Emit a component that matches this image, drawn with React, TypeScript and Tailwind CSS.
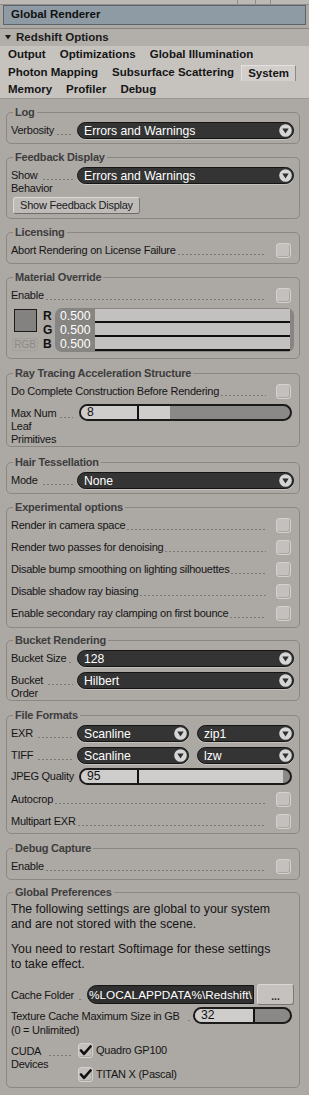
import React from 'react';

const LABEL = 'text-[11px] leading-[13px] tracking-[-0.25px] text-[#151515]';

function Leader({ className = '' }: { className?: string }) {
  return (
    <div
      className={`mb-[2px] h-px min-w-0 flex-1 self-end bg-[repeating-linear-gradient(90deg,#7b7875_0px,#7b7875_2px,transparent_2px,transparent_4px)] ${className}`}
    />
  );
}

function FieldLabel({
  lines,
  w = 'w-[66px]',
  leader = 'ml-[5px] mr-[4px]',
  pt = 'pt-[2px]',
  lh = 'leading-[13px]',
}: {
  lines: string[];
  w?: string;
  leader?: string;
  pt?: string;
  lh?: string;
}) {
  return (
    <div className={`${w} shrink-0 ${pt} ${LABEL} ${lh}`}>
      <div className="flex">
        <span className="whitespace-nowrap">{lines[0]}</span>
        <Leader className={leader} />
      </div>
      {lines.slice(1).map((l) => (
        <div key={l} className="whitespace-nowrap">
          {l}
        </div>
      ))}
    </div>
  );
}

function Check({ checked = false, className = '' }: { checked?: boolean; className?: string }) {
  return (
    <div
      className={`flex h-[15px] w-[15px] shrink-0 items-center justify-center rounded-[3px] border border-[#d3d0cd] bg-[#c3c0bd] shadow-[inset_-1px_-1px_0_#a8a5a2] ${className}`}
    >
      {checked && (
        <svg width="13" height="13" viewBox="0 0 13 13">
          <path d="M2 6.5 L5 9.8 L11.5 2.5" fill="none" stroke="#111" strokeWidth="2.6" strokeLinecap="round" strokeLinejoin="round" />
        </svg>
      )}
    </div>
  );
}

function CheckRow({ label }: { label: string }) {
  return (
    <div className="flex h-[22px] items-center">
      <div className={`flex min-w-0 flex-1 ${LABEL}`}>
        <span className="whitespace-nowrap">{label}</span>
        <Leader className="ml-[2px] mr-[10px]" />
      </div>
      <Check className="mr-[3px]" />
    </div>
  );
}

function Dropdown({ value, className = '' }: { value: string; className?: string }) {
  return (
    <div
      className={`flex h-[17px] items-center rounded-full border border-[#141414] bg-[#343434] pl-[6px] pr-px shadow-[0_1px_0_#c4c1be] ${className}`}
    >
      <span className="min-w-0 flex-1 truncate pt-px text-[12.2px] leading-[14px] text-white">{value}</span>
      <svg width="13" height="13" viewBox="0 0 13 13" className="shrink-0">
        <circle cx="6.5" cy="6.5" r="6.3" fill="#d6d6d6" />
        <path d="M3.3 4.6 L9.7 4.6 L6.5 9.4 Z" fill="#2e2e2e" />
      </svg>
    </div>
  );
}

function Slider({
  value,
  textW,
  fill,
  className = '',
}: {
  value: string;
  textW: string;
  fill: string;
  className?: string;
}) {
  return (
    <div className={`flex h-[17px] overflow-hidden rounded-full border-2 border-[#1b1b1b] bg-[#8b8987] ${className}`}>
      <div className={`${textW} shrink-0 bg-[#cfcdcb] pl-[6px] text-[12.2px] leading-[13px] text-[#111]`}>{value}</div>
      <div className="w-[2px] shrink-0 bg-[#111]" />
      <div className={`${fill} shrink-0 bg-[#cfcdcb]`} />
    </div>
  );
}

function Group({ title, className = '', children }: { title: string; className?: string; children: React.ReactNode }) {
  return (
    <fieldset
      className={`ml-[6px] w-[294px] min-w-0 rounded-[5px] border border-[#8b8884] pl-[4px] pr-[5px] pt-0 ${className}`}
    >
      <legend className="ml-[2px] px-[2px] text-[11px] font-bold leading-[14px] tracking-[-0.2px] text-[#3d3d3d]">
        {title}
      </legend>
      {children}
    </fieldset>
  );
}

function TabRow({ items, selected, h }: { items: string[]; selected?: string; h: string }) {
  return (
    <div className={`flex ${h} items-start pl-px`}>
      {items.map((t) =>
        t === selected ? (
          <div
            key={t}
            className="mt-px flex h-[16px] items-center border-l border-r border-t border-l-[#e4e1de] border-r-[#8a8784] border-t-[#e4e1de] bg-[#d1cecb] px-[6px] text-[11.5px] font-bold text-[#151515]"
          >
            {t}
          </div>
        ) : (
          <div key={t} className={`flex ${h} items-center px-[7px] text-[11.5px] font-bold text-[#151515]`}>
            {t}
          </div>
        ),
      )}
    </div>
  );
}

export default function App() {
  return (
    <div className="h-[1095px] w-[309px] overflow-hidden bg-[#aca8a4] font-['Liberation_Sans',Arial,sans-serif] text-[#151515]">
      {/* top strip */}
      <div className="flex h-[5px] border-b border-[#8f8c89] bg-[#bcb9b5]">
        <div className="flex-1" />
        <div className="w-[18px] border-l border-[#8f8c89]" />
        <div className="w-[15px] border-l border-[#8f8c89]" />
        <div className="w-[39px] border-l border-[#8f8c89]" />
      </div>

      <div className="mx-[3px] flex h-[20px] items-center border border-[#5c656b] bg-[#8e9ba4] pl-[7px] text-[11.5px] font-bold text-[#111]">
        Global Renderer
      </div>
      <div className="h-[3px]" />
      <div className="h-px bg-[#878480]" />

      <div className="flex h-[17px] items-center bg-[#b2aeaa] pl-[5px] text-[11.5px] font-bold text-[#1a1a1a]">
        <svg width="6" height="5" viewBox="0 0 6 5" className="mr-[5px]">
          <path d="M0 0 L6 0 L3 4.5 Z" fill="#1a1a1a" />
        </svg>
        Redshift Options
      </div>

      <div className="border-b border-[#9b9894] bg-[#c6c3bf]">
        <TabRow h="h-[18px]" items={['Output', 'Optimizations', 'Global Illumination']} />
        <TabRow h="h-[18px]" items={['Photon Mapping', 'Subsurface Scattering', 'System']} selected="System" />
        <TabRow h="h-[16px]" items={['Memory', 'Profiler', 'Debug']} />
      </div>

      <Group title="Log" className="mt-[6px] pb-[4px]">
        <div className="mt-[3px] flex">
          <FieldLabel lines={['Verbosity']} leader="ml-[3px] mr-[4px]" />
          <Dropdown value="Errors and Warnings" className="flex-1" />
        </div>
      </Group>

      <Group title="Feedback Display" className="mt-[6px] pb-[4px]">
        <div className="mt-[3px] flex items-start">
          <FieldLabel lines={['Show', 'Behavior']} />
          <Dropdown value="Errors and Warnings" className="flex-1" />
        </div>
        <div className="ml-[2px] mt-[2px] flex h-[17px] w-[127px] items-center justify-center rounded-[3px] border border-b-[#6f6c69] border-l-[#dcd9d6] border-r-[#7a7774] border-t-[#dcd9d6] bg-[#bebbb8] text-[11px] tracking-[-0.25px] text-[#1c1c1c]">
          Show Feedback Display
        </div>
      </Group>

      <Group title="Licensing" className="mt-[6px] pb-[2px]">
        <CheckRow label="Abort Rendering on License Failure" />
      </Group>

      <Group title="Material Override" className="mt-[6px] pb-[6px]">
        <CheckRow label="Enable" />
        <div className="mt-[2px] flex h-[44px]">
          <div className="flex w-[31px] shrink-0 flex-col">
            <div className="ml-[3px] mt-px h-[23px] w-[23px] border border-[#1c1c1c] bg-[#838281]" />
            <div className="ml-px mt-[6px] flex h-[13px] w-[26px] items-center justify-center rounded-[2px] border border-[#a3a09d] text-[10px] text-[#8d8a87]">
              RGB
            </div>
          </div>
          <div className="w-[13px] shrink-0 pl-px pt-px text-[12px] font-bold leading-[14px] text-[#111]">
            <div>R</div>
            <div>G</div>
            <div>B</div>
          </div>
          <div className="flex flex-1 flex-col rounded-[7px] bg-[#878582] py-px pl-[5px] pr-[4px]">
            {['R', 'G', 'B'].map((c) => (
              <div key={c} className="flex h-[14px]">
                <div className="w-[35px] shrink-0 text-[12.2px] leading-[14px] text-white">0.500</div>
                <div className="flex-1 border-b-2 border-[#111] bg-[#c3c1bf]" />
              </div>
            ))}
          </div>
        </div>
      </Group>

      <Group title="Ray Tracing Acceleration Structure" className="mt-[7px] pb-0">
        <CheckRow label="Do Complete Construction Before Rendering" />
        <div className="mt-[2px] flex items-start">
          <FieldLabel lines={['Max Num', 'Leaf', 'Primitives']} pt="pt-[3px]" leader="ml-[4px] mr-[4px]" />
          <Slider value="8" textW="w-[56px]" fill="w-[31px]" className="mx-[2px] flex-1" />
        </div>
      </Group>

      <Group title="Hair Tessellation" className="mt-[8px] pb-[4px]">
        <div className="mt-[3px] flex">
          <FieldLabel lines={['Mode']} />
          <Dropdown value="None" className="flex-1" />
        </div>
      </Group>

      <Group title="Experimental options" className="mt-[6px] pb-[3px]">
        <CheckRow label="Render in camera space" />
        <CheckRow label="Render two passes for denoising" />
        <CheckRow label="Disable bump smoothing on lighting silhouettes" />
        <CheckRow label="Disable shadow ray biasing" />
        <CheckRow label="Enable secondary ray clamping on first bounce" />
      </Group>

      <Group title="Bucket Rendering" className="mt-[5px] pb-0">
        <div className="mt-[3px] flex">
          <FieldLabel lines={['Bucket Size']} leader="ml-[3px] mr-[4px]" />
          <Dropdown value="128" className="flex-1" />
        </div>
        <div className="mt-[5px] flex items-start">
          <FieldLabel lines={['Bucket', 'Order']} />
          <Dropdown value="Hilbert" className="flex-1" />
        </div>
      </Group>

      <Group title="File Formats" className="mt-[7px] pb-px">
        <div className="mt-[3px] flex">
          <FieldLabel lines={['EXR']} />
          <Dropdown value="Scanline" className="w-[112px] shrink-0" />
          <Dropdown value="zip1" className="ml-[8px] flex-1" />
        </div>
        <div className="mt-[5px] flex">
          <FieldLabel lines={['TIFF']} />
          <Dropdown value="Scanline" className="w-[112px] shrink-0" />
          <Dropdown value="lzw" className="ml-[8px] flex-1" />
        </div>
        <div className="mt-[4px] flex">
          <div className={`w-[66px] shrink-0 whitespace-nowrap pt-[2px] ${LABEL}`}>JPEG Quality</div>
          <Slider value="95" textW="w-[56px]" fill="w-[144px]" className="mx-[2px] flex-1" />
        </div>
        <div className="mt-[3px]">
          <CheckRow label="Autocrop" />
          <CheckRow label="Multipart EXR" />
        </div>
      </Group>

      <Group title="Debug Capture" className="mt-[7px] pb-[2px]">
        <CheckRow label="Enable" />
      </Group>

      <Group title="Global Preferences" className="mt-[5px] pb-[5px]">
        <div className="mt-[3px] text-[12.3px] leading-[15px] text-[#151515]">
          <p>
            The following settings are global to your system
            <br />
            and are not stored with the scene.
          </p>
          <p className="mt-[10px]">
            You need to restart Softimage for these settings
            <br />
            to take effect.
          </p>
        </div>
        <div className="mt-[13px] flex h-[19px] items-center">
          <FieldLabel lines={['Cache Folder']} w="w-[76px]" leader="ml-[5px] mr-[6px]" pt="pt-[1px]" />
          <div className="flex h-[19px] w-[167px] shrink-0 items-center overflow-hidden rounded-l-full border border-[#151515] bg-[#2f2f2f] pl-px">
            <span className="whitespace-nowrap text-[11.8px] leading-[14px] text-white">%LOCALAPPDATA%\Redshift\</span>
          </div>
          <div className="ml-[3px] flex h-[21px] flex-1 items-end justify-center rounded-[3px] border border-b-[#7a7774] border-l-[#dad7d4] border-r-[#7a7774] border-t-[#dad7d4] bg-[#c4c1be] pb-[2px] text-[10px] font-bold leading-[10px] text-[#222]">
            ...
          </div>
        </div>
        <div className="mt-[3px] flex items-start">
          <FieldLabel
            lines={['Texture Cache Maximum Size in GB', '(0 = Unlimited)']}
            w="w-[182px]"
            leader="ml-[8px] mr-[3px]"
            lh="leading-[14px]"
          />
          <Slider value="32" textW="w-[58px]" fill="w-0" className="mr-[2px] flex-1" />
        </div>
        <div className="mt-[6px] flex items-start">
          <FieldLabel lines={['CUDA', 'Devices']} w="w-[67px]" leader="ml-[8px] mr-[5px]" />
          <div className="flex flex-col gap-[9px]">
            <div className="flex items-center">
              <Check checked />
              <span className={`ml-[3px] ${LABEL}`}>Quadro GP100</span>
            </div>
            <div className="flex items-center">
              <Check checked />
              <span className={`ml-[3px] ${LABEL}`}>TITAN X (Pascal)</span>
            </div>
          </div>
        </div>
      </Group>
    </div>
  );
}
